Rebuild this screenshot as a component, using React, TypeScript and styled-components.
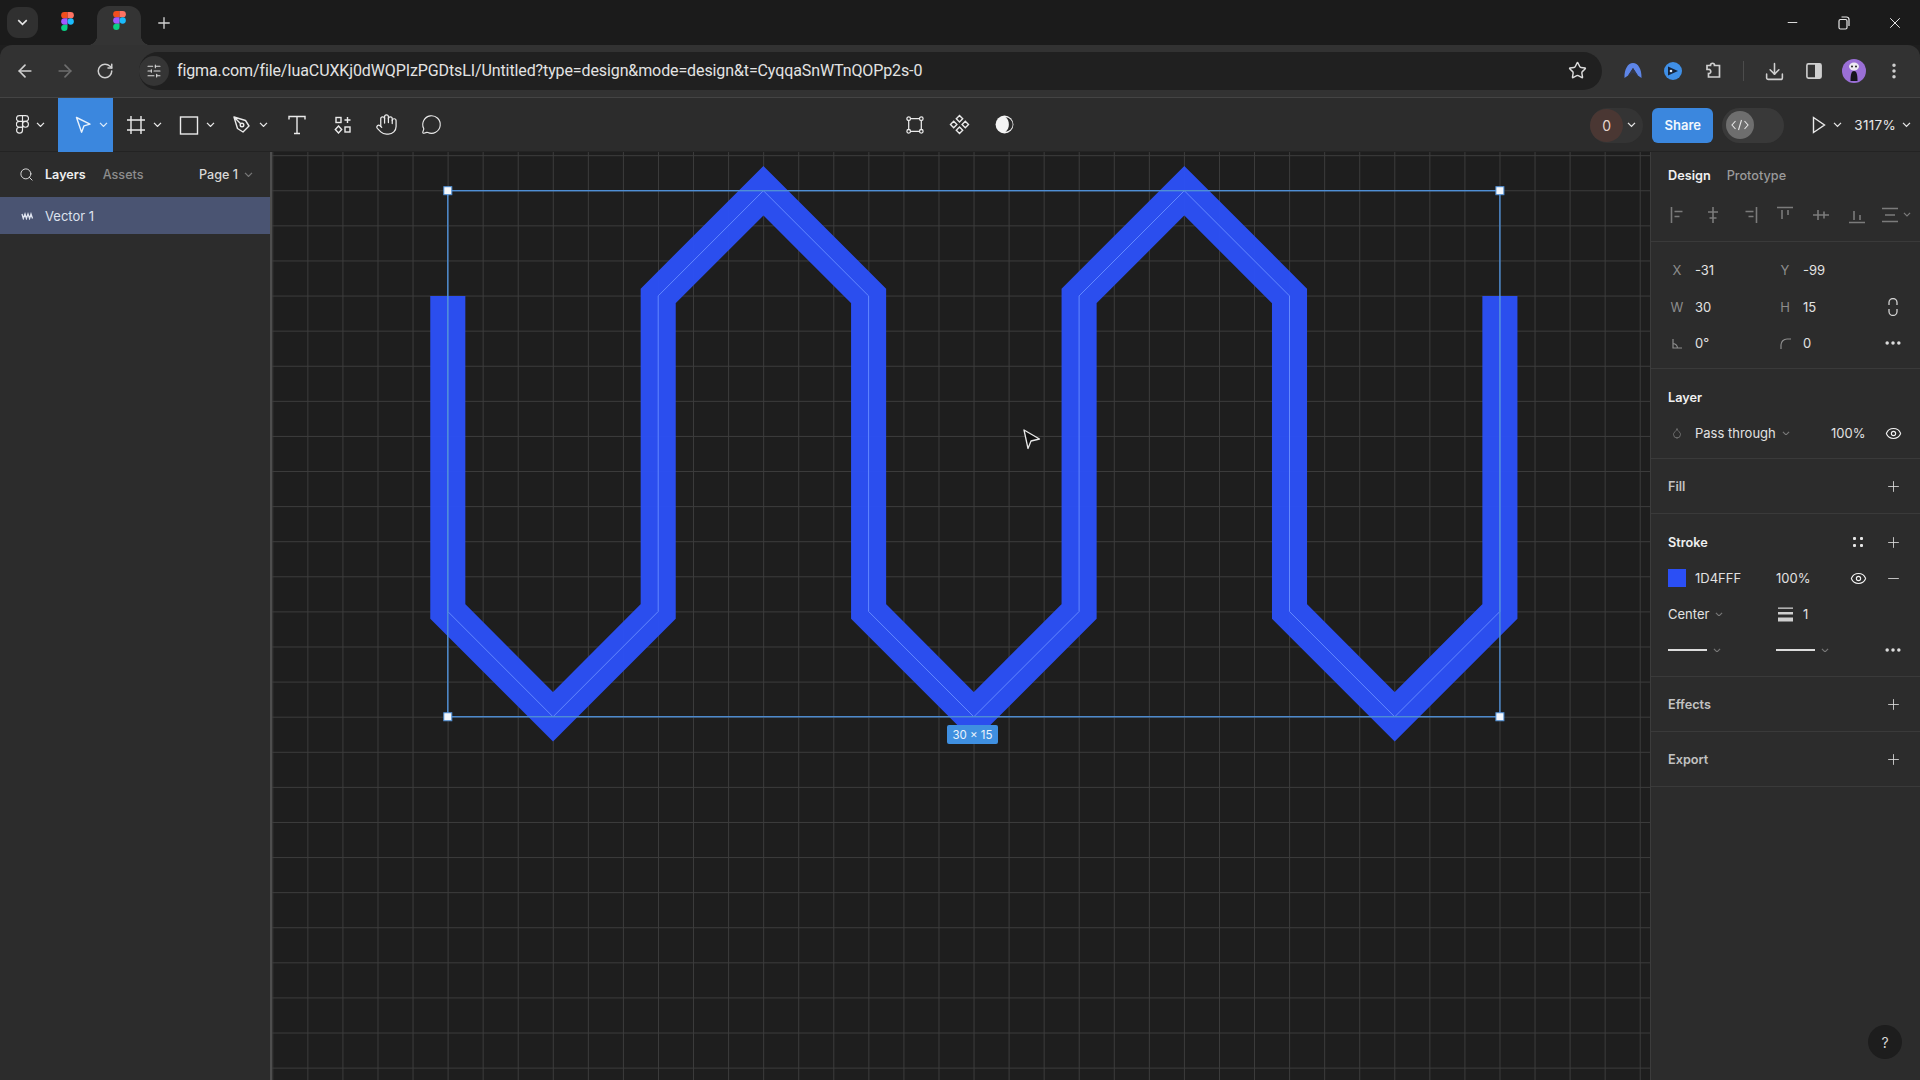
import React from "react";
import styled, { createGlobalStyle } from "styled-components";
import {
  ArrowLeft, ArrowRight, RotateCw, Star, Download, Ellipsis, EllipsisVertical, Plus, Minus, Eye,
  Search, Hand, MessageCircle, SlidersHorizontal, X, Droplet,
} from "lucide-react";

const Global = createGlobalStyle`
  html, body { margin: 0; padding: 0; background: #1e1e1e; }
  body { font-family: Inter, "Liberation Sans", sans-serif; overflow: hidden; }
  * { box-sizing: border-box; }
`;

const Page = styled.div`
  width: 1920px; height: 1080px; display: flex; flex-direction: column; overflow: hidden; background: #1e1e1e;
`;

/* ---------- Browser chrome ---------- */
const TabStrip = styled.div`
  height: 45px; background: #1b1b1b; display: flex; align-items: flex-start; padding: 7px 0 0 7px; flex: none;
`;
const TabListButton = styled.div`
  width: 31px; height: 31px; border-radius: 11px; background: #303030; color: #e6e6e6;
  display: flex; align-items: center; justify-content: center;
`;
const Tab = styled.div<{ $active?: boolean }>`
  position: relative; height: 39px; width: 44px; display: flex; align-items: center; justify-content: center;
  padding-bottom: 11px; margin-top: ${(p) => (p.$active ? "-1px" : "0")};
  margin-left: ${(p) => (p.$active ? "8px" : "7px")};
  background: ${(p) => (p.$active ? "#343434" : "transparent")};
  border-radius: 12px 12px 0 0;
  ${(p) => p.$active && `
    &::before, &::after { content: ""; position: absolute; bottom: 0; width: 10px; height: 10px; }
    &::before { left: -10px; background: radial-gradient(circle at 0 0, transparent 10px, #343434 10.5px); }
    &::after { right: -10px; background: radial-gradient(circle at 100% 0, transparent 10px, #343434 10.5px); }
  `}
`;
const NewTab = styled.div`
  width: 30px; height: 31px; margin-left: 8px; color: #d2d2d2; display: flex; align-items: center; justify-content: center;
`;
const WindowControls = styled.div`
  margin-left: auto; display: flex; align-items: center; height: 31px; color: #e8e8e8;
`;
const WindowButton = styled.div`
  width: 51px; display: flex; align-items: center; justify-content: center;
`;
const BrowserBar = styled.div`
  height: 53px; background: #323232; border-radius: 12px 12px 0 0; flex: none; display: flex; align-items: center;
  padding: 0 6px 0 5px; border-bottom: 1px solid #444;
`;
const NavButton = styled.div<{ $off?: boolean }>`
  width: 40px; height: 40px; display: flex; align-items: center; justify-content: center;
  color: ${(p) => (p.$off ? "#6e6e6e" : "#cfcfcf")};
`;
const AddressBar = styled.div`
  flex: 1; height: 38px; margin: -1px 11px 0 14px; border-radius: 19px; background: #202020; display: flex; align-items: center;
  padding-right: 15px;
`;
const SiteChip = styled.div`
  width: 30px; height: 30px; border-radius: 50%; background: #353535; color: #dcdcdc; flex: none;
  display: flex; align-items: center; justify-content: center;
`;
const Url = styled.div`
  margin-left: 8px; font-family: Roboto, "Liberation Sans", sans-serif; font-size: 16px; color: #e3e3e3; white-space: nowrap;
  letter-spacing: -0.11px;
`;
const UrlStar = styled.div`
  margin-left: auto; color: #dcdcdc; display: flex;
`;
const ChromeButton = styled.div`
  width: 40px; height: 40px; display: flex; align-items: center; justify-content: center; color: #cfcfcf;
`;
const ChromeDivider = styled.div`
  width: 1px; height: 20px; background: #4c4c4c; margin: 0 10px;
`;
const AvatarFace = styled.div`
  width: 24px; height: 24px; border-radius: 50%; background: #9a6fd6; display: flex; align-items: center; justify-content: center;
`;

/* ---------- Figma toolbar ---------- */
const AppToolbar = styled.div`
  height: 54px; flex: none; background: #2c2c2c; display: grid; grid-template-columns: 1fr auto 1fr; align-items: center;
  border-bottom: 1px solid #232323;
`;
const ToolGroup = styled.div`
  display: flex; align-items: center; height: 54px;
`;
const Tool = styled.div<{ $w: number; $pad?: number; $active?: boolean }>`
  width: ${(p) => p.$w}px; height: 54px; flex: none; display: flex; align-items: center; justify-content: center; gap: 7px;
  padding: 0 0 1px ${(p) => p.$pad ?? 0}px; color: #eaeaea; background: ${(p) => (p.$active ? "#3b87de" : "transparent")};
`;
const CenterTools = styled.div`
  display: flex; align-items: center; gap: 25px; color: #eaeaea; padding-bottom: 1px;
`;
const RightTools = styled.div`
  display: flex; align-items: center; justify-content: flex-end; height: 54px; color: #e8e8e8; padding-right: 9px;
`;
const Multiplayer = styled.div`
  width: 53px; height: 35px; border-radius: 18px; background: #343434; display: flex; align-items: center; gap: 4px;
`;
const AvatarZero = styled.div`
  width: 33px; height: 33px; border-radius: 50%; background: #4a3733; color: #e6d4cc; font-size: 14px;
  display: flex; align-items: center; justify-content: center;
`;
const ShareButton = styled.div`
  width: 61px; height: 35px; margin-left: 9px; border-radius: 6px; background: #3b87de; color: #f2f7fd; font-size: 13px; font-weight: 600;
  display: flex; align-items: center; justify-content: center;
`;
const DevToggle = styled.div`
  width: 62px; height: 35px; margin-left: 9px; border-radius: 18px; background: #393939; display: flex; align-items: center; padding-left: 4px;
`;
const DevKnob = styled.div`
  width: 28px; height: 28px; border-radius: 50%; background: #6e6e6e; color: #e6e6e6; display: flex; align-items: center; justify-content: center;
`;
const PlayGroup = styled.div`
  display: flex; align-items: center; gap: 7px; margin-left: 28px;
`;
const Zoom = styled.div`
  display: flex; align-items: center; gap: 6px; margin-left: 12px; font-size: 13.5px; color: #e8e8e8; letter-spacing: 0.3px;
`;

/* ---------- Work area ---------- */
const Work = styled.div`
  flex: 1; display: flex; min-height: 0;
`;
const LeftPanel = styled.div`
  width: 272px; flex: none; background: #2c2c2c; border-right: 2px solid #4e4e4e;
`;
const PanelTabs = styled.div`
  height: 45px; display: flex; align-items: center; padding: 0 17px 0 19px;
`;
const PanelSearch = styled.div`
  width: 26px; color: #d8d8d8; display: flex;
`;
const PanelTab = styled.div<{ $on?: boolean }>`
  font-weight: ${(p) => (p.$on ? 600 : 500)}; color: ${(p) => (p.$on ? "#efefef" : "#8d8d8d")}; margin-right: 17px; font-size: 12.6px;
`;
const PagePicker = styled.div`
  margin-left: auto; display: flex; align-items: center; gap: 6px; color: #d8d8d8; font-size: 12.6px; font-weight: 500;
`;
const LayerRow = styled.div`
  height: 37px; background: #4a5472; display: flex; align-items: center; padding-left: 21px; gap: 11px; color: #dde2ee; font-size: 13px;
`;
const Canvas = styled.div`
  position: relative; flex: 1; overflow: hidden; background-color: #1e1e1e;
  background-image:
    linear-gradient(to right, #3c3c3c 1px, transparent 1px),
    linear-gradient(to bottom, #3c3c3c 1px, transparent 1px);
  background-size: 35.07px 35.1px;
  background-position: 0.3px 3.2px;
`;
const CanvasArt = styled.svg`
  position: absolute; left: 0; top: 0;
`;
const SizeBadge = styled.div`
  position: absolute; left: 675px; top: 573px; width: 51px; height: 19px; border-radius: 2px; background: #3f8fe0; color: #eaf3fc;
  font-size: 11.5px; display: flex; align-items: center; justify-content: center; white-space: nowrap;
`;

/* ---------- Right panel ---------- */
const RightPanel = styled.div`
  position: relative; width: 270px; flex: none; background: #2c2c2c; border-left: 1px solid #3c3c3c; font-size: 13px; color: #e2e2e2;
`;
const DesignTabs = styled.div`
  height: 46px; display: flex; align-items: center; padding-left: 17px; gap: 16px;
`;
const DesignTab = styled.div<{ $on?: boolean }>`
  font-size: 12.7px; font-weight: ${(p) => (p.$on ? 600 : 500)}; color: ${(p) => (p.$on ? "#f0f0f0" : "#9a9a9a")};
`;
const AlignRow = styled.div`
  height: 44px; padding: 0 0 10px 8px; display: grid; grid-template-columns: repeat(6, 36px) auto; align-items: center; justify-items: center;
  color: #7b7b7b; border-bottom: 1px solid #3a3a3a;
`;
const DistField = styled.div`
  display: flex; align-items: center; gap: 3px; margin-left: -4px; color: #7b7b7b;
`;
const Section = styled.div<{ $top?: number }>`
  padding: ${(p) => p.$top ?? 10}px 0 0; border-bottom: 1px solid #3a3a3a;
`;
const FieldGrid = styled.div<{ $h?: number }>`
  display: grid; grid-template-columns: 27px 81px 27px 42px 26px 35px; align-items: center; padding-left: 17px;
  height: ${(p) => p.$h ?? 36}px;
`;
const FieldLabel = styled.div`
  width: 18px; display: flex; justify-content: center; color: #8d8d8d; font-size: 13px;
`;
const FieldValue = styled.div`
  color: #e2e2e2; font-size: 13px; white-space: nowrap;
`;
const SectionHead = styled.div<{ $on?: boolean }>`
  grid-column: 1 / span 4; font-weight: 600; font-size: 12.7px; color: ${(p) => (p.$on ? "#f0f0f0" : "#c2c2c2")};
`;
const Slot = styled.div<{ $c: number }>`
  grid-column: ${(p) => p.$c}; justify-self: ${(p) => (p.$c === 6 ? "end" : "start")};
  display: flex; align-items: center; justify-content: center; width: 26px; color: #dcdcdc;
`;
const EyeSlot = styled(Slot)`
  color: #f2f2f2;
`;
const InlineField = styled.div<{ $c?: string }>`
  grid-column: ${(p) => p.$c ?? "auto"}; display: flex; align-items: center; gap: 6px; color: #e2e2e2; font-size: 13px; white-space: nowrap;
`;
const OpacityValue = styled.div`
  grid-column: 4; font-size: 13px; padding-left: 28px; color: #e2e2e2; white-space: nowrap;
`;
const Swatch = styled.div`
  width: 18px; height: 18px; background: #2b4ff5;
`;
const StrokeLine = styled.div`
  width: 39px; height: 2px; background: #dcdcdc;
`;
const FillerRow = styled.div<{ $h: number }>`
  height: ${(p) => p.$h}px;
`;
const HelpButton = styled.div`
  position: absolute; right: 18px; bottom: 21px; width: 34px; height: 34px; border-radius: 50%; background: #1d1d1d; color: #d6d6d6;
  font-size: 14px; display: flex; align-items: center; justify-content: center;
`;

/* ---------- Small drawings ---------- */
const Chev = ({ c = "currentColor", w = 9 }: { c?: string; w?: number }) => (
  <svg width={w} height={w * 0.62} viewBox="0 0 9 5.6" fill="none" stroke={c} strokeWidth="1.3"><path d="M1 .9l3.500 3.500L8 .9" /></svg>
);
const FigmaColor = () => (
  <svg width="13" height="19" viewBox="0 0 12 18">
    <path d="M3 0h3v6H3a3 3 0 0 1 0-6z" fill="#f24e1e" />
    <path d="M6 0h3a3 3 0 0 1 0 6H6z" fill="#ff7262" />
    <path d="M3 6h3v6H3a3 3 0 0 1 0-6z" fill="#a259ff" />
    <circle cx="9" cy="9" r="3" fill="#1abcfe" />
    <path d="M3 12h3v3a3 3 0 1 1-3-3z" fill="#0acf83" />
  </svg>
);
const line = { fill: "none", stroke: "currentColor", strokeWidth: 1.4 } as const;
const FigmaMono = () => (
  <svg width="13" height="19" viewBox="0 0 12 18" {...line} strokeWidth={1.1}>
    <path d="M3 .6h3v5.400H3a2.700 2.700 0 0 1 0-5.400zM6 .6h3a2.700 2.700 0 0 1 0 5.400H6zM3 6h3v5.600H3A2.800 2.800 0 0 1 3 6z" />
    <circle cx="8.800" cy="8.800" r="2.800" />
    <path d="M3 11.600h3v3a2.800 2.800 0 1 1-3-3z" />
  </svg>
);
const MoveArrow = () => (
  <svg width="18" height="18" viewBox="0 0 18 18" fill="none" stroke="#e9f2fc" strokeWidth="1.4" strokeLinejoin="round"><path d="M2.500 1.500l13.500 6.600-6 1.700-2.400 6.400z" /></svg>
);
const FrameGlyph = () => (
  <svg width="20" height="20" viewBox="0 0 20 20" {...line}><path d="M5 1v18M15 1v18M1 5h18M1 15h18" /></svg>
);
const RectGlyph = () => (
  <svg width="20" height="20" viewBox="0 0 20 20" {...line}><rect x="1.500" y="2" width="17" height="17" /></svg>
);
const PenGlyph = () => (
  <svg width="20" height="20" viewBox="0 0 20 20" {...line} strokeLinejoin="round">
    <path d="M2 2l11.500 3.500L17 11l-6 6-5.500-3.500zM2 2l6.700 6.700" />
    <circle cx="10" cy="10" r="1.800" />
  </svg>
);
const TextGlyph = () => (
  <svg width="20" height="20" viewBox="0 0 20 20" {...line}><path d="M2 4.500V1.500h16v3M10 1.500v17M7 18.500h6" /></svg>
);
const ActionsGlyph = () => (
  <svg width="18" height="18" viewBox="0 0 18 18" {...line}>
    <rect x="2" y="1.500" width="5" height="5" />
    <path d="M13.500 1v6M10.500 4h6" />
    <path d="M4.500 10l3.200 3.500-3.200 3.500-3.200-3.500z" />
    <rect x="11" y="11" width="5" height="5" />
  </svg>
);
const EditObject = () => (
  <svg width="18" height="18" viewBox="0 0 20 20" {...line}>
    <path d="M5 3h10M5 17h10M3 5v10M17 5v10" />
    <circle cx="3" cy="3" r="2" /><circle cx="17" cy="3" r="2" /><circle cx="3" cy="17" r="2" /><circle cx="17" cy="17" r="2" />
  </svg>
);
const Diamonds = () => (
  <svg width="21" height="21" viewBox="0 0 21 21" {...line}>
    <path d="M10.500 1.500l3.200 3.200-3.200 3.200-3.200-3.200zM10.500 13.100l3.200 3.200-3.200 3.200-3.200-3.200zM4.700 7.300l3.200 3.200-3.200 3.200-3.200-3.200zM16.300 7.300l3.200 3.200-3.200 3.200-3.200-3.200z" />
  </svg>
);
const Contrast = () => (
  <svg width="19" height="19" viewBox="0 0 20 20">
    <circle cx="10" cy="10" r="9.400" fill="#f4f4f4" />
    <path d="M11 2.400a7.600 7.600 0 0 1 0 15.200c2.600-1.600 3.600-4.600 3.600-7.600s-1-6-3.600-7.600z" fill="#2c2c2c" />
  </svg>
);
const CodeGlyph = () => (
  <svg width="18" height="12" viewBox="0 0 18 12" fill="none" stroke="currentColor" strokeWidth="1.1"><path d="M4.500 2L1 6l3.500 4M13.500 2L17 6l-3.500 4M10.500 1L7.500 11" /></svg>
);
const PlayGlyph = () => (
  <svg width="14" height="18" viewBox="0 0 14 18" {...line}><path d="M1.500 1.500l11 7.500-11 7.500z" /></svg>
);
const RestoreGlyph = () => (
  <svg width="12" height="14" viewBox="0 0 12 14" {...line} strokeWidth={1.2}><rect x="1" y="3.500" width="8" height="9.500" rx="1.500" /><path d="M3.500 1h5A2.500 2.500 0 0 1 11 3.500V10" /></svg>
);
const NordGlyph = () => (
  <svg width="22" height="20" viewBox="0 0 22 20">
    <path d="M2.500 17C2.200 8 6 2 11 2s8.800 6 8.500 15l-3.600-2.500L11 7l-4.900 7.500z" fill="#5e86e8" />
    <path d="M6.100 14.500L11 7l4.900 7.500-3.900-2.200h-2z" fill="#33374a" />
  </svg>
);
const PlayExt = () => (
  <svg width="18" height="18" viewBox="0 0 18 18">
    <circle cx="9" cy="9" r="9" fill="#3f8fe6" />
    <path d="M4 4.500l10 4.500-10 4.500z" fill="#15233a" />
    <circle cx="7" cy="9" r="1.300" fill="#dfeaf8" />
  </svg>
);
const PuzzleGlyph = () => (
  <svg width="20" height="20" viewBox="0 0 20 20" {...line} strokeWidth={1.7}>
    <path d="M4 4.500h3.500c-.4-3 4.500-3 4 0H16.500V16H5.500v-3.500c3 .5 3-4.500 0-4H4z" />
  </svg>
);
const SidebarGlyph = () => (
  <svg width="16" height="16" viewBox="0 0 16 16"><rect x=".9" y=".9" width="14.200" height="14.200" rx="1.500" fill="none" stroke="#cfcfcf" strokeWidth="1.600" /><rect x="9" y="1" width="6" height="14" fill="#cfcfcf" /></svg>
);
const FaceGlyph = () => (
  <svg width="16" height="20" viewBox="0 0 16 20">
    <ellipse cx="8" cy="5.500" rx="5" ry="4" fill="#ece8f2" />
    <circle cx="6" cy="5.500" r="1" fill="#222" /><circle cx="10" cy="5.500" r="1" fill="#222" />
    <path d="M4.500 20c0-7 1-10 3.500-10s3.500 3 3.500 10z" fill="#14141a" />
  </svg>
);
const VectorMini = () => (
  <svg width="13" height="8" viewBox="0 0 13 8" fill="none" stroke="#dfe4f0" strokeWidth="1.300"><path d="M1 2l1.300 4.500L4 2l1.400 4.500L7 2l1.600 4.500L10 2l1.500 4.500" /></svg>
);
const alignIcons: Record<string, React.ReactNode> = {
  left: <path d="M4.500 2v16M7.500 6.500h8M7.500 11.500h5" />,
  centerH: <path d="M10 2v16M5 7h10M6.500 13h7" />,
  right: <path d="M17.500 2v16M6.500 6.500h8M9.500 11.500h5" />,
  top: <path d="M2 2.500h16M7 5v9M13 5v5" />,
  centerV: <path d="M2 10h16M7 5v10M13 6.500v7" />,
  bottom: <path d="M2 17.500h16M7 6v9M13 10v5" />,
};
const AlignGlyph = ({ kind }: { kind: string }) => (
  <svg width="20" height="20" viewBox="0 0 20 20" fill="none" stroke="currentColor" strokeWidth="1.600">{alignIcons[kind]}</svg>
);
const DistGlyph = () => (
  <svg width="19" height="16" viewBox="0 0 19 16" fill="none" stroke="currentColor" strokeWidth="1.500"><path d="M1 1.500h16M4 8h10M1 14.500h16" /></svg>
);
const LinkGlyph = () => (
  <svg width="12" height="18" viewBox="0 0 12 18" fill="none" stroke="#d2d2d2" strokeWidth="1.300"><path d="M2 7V4.500a4 4 0 0 1 8 0V7M2 11v2.500a4 4 0 0 0 8 0V11" /></svg>
);
const AngleGlyph = () => (
  <svg width="11" height="11" viewBox="0 0 11 11" fill="none" stroke="#8d8d8d" strokeWidth="1.200"><path d="M1 1v9h9M1 5.500a5 5 0 0 1 4.500 4.500" /></svg>
);
const RadiusGlyph = () => (
  <svg width="11" height="11" viewBox="0 0 11 11" fill="none" stroke="#8d8d8d" strokeWidth="1.200"><path d="M1 11V7a6 6 0 0 1 6-6h4" /></svg>
);
const StylesGlyph = () => (
  <svg width="14" height="14" viewBox="0 0 14 14" fill="#e6e6e6"><rect x="2" y="2" width="3" height="3" rx="1" /><rect x="9" y="2" width="3" height="3" rx="1" /><rect x="2" y="9" width="3" height="3" rx="1" /><rect x="9" y="9" width="3" height="3" rx="1" /></svg>
);
const WeightGlyph = () => (
  <svg width="15" height="15" viewBox="0 0 15 15" fill="#cfcfcf"><rect width="15" height="1.300" y="0.500" /><rect width="15" height="2.500" y="5" /><rect width="15" height="4" y="10.500" /></svg>
);

const U = 35.07;
const OX = 447.8;
const OY = 190.7;
const pts = [[0,3],[0,12],[3,15],[6,12],[6,3],[9,0],[12,3],[12,12],[15,15],[18,12],[18,3],[21,0],[24,3],[24,12],[27,15],[30,12],[30,3]]
  .map(([x, y]) => `${(OX + x * U).toFixed(1)},${(OY + y * U).toFixed(1)}`).join(" ");
const BW = 30 * U;
const BH = 15 * U;
const corners = [[OX, OY],[OX + BW, OY],[OX, OY + BH],[OX + BW, OY + BH]];

const Plain = ({ label }: { label: string }) => (
  <FieldGrid $h={54}>
    <SectionHead>{label}</SectionHead>
    <Slot $c={6}><Plus size={17} strokeWidth={1.2} /></Slot>
  </FieldGrid>
);

export default function App() {
  return (
    <Page>
      <Global />
      <TabStrip>
        <TabListButton><Chev w={11} /></TabListButton>
        <Tab><FigmaColor /></Tab>
        <Tab $active><FigmaColor /></Tab>
        <NewTab><Plus size={18} strokeWidth={1.8} /></NewTab>
        <WindowControls>
          <WindowButton><Minus size={15} strokeWidth={1.5} /></WindowButton>
          <WindowButton><RestoreGlyph /></WindowButton>
          <WindowButton><X size={18} strokeWidth={1.3} /></WindowButton>
        </WindowControls>
      </TabStrip>
      <BrowserBar>
        <NavButton><ArrowLeft size={20} strokeWidth={2} /></NavButton>
        <NavButton $off><ArrowRight size={20} strokeWidth={2} /></NavButton>
        <NavButton><RotateCw size={18} strokeWidth={2} /></NavButton>
        <AddressBar>
          <SiteChip><SlidersHorizontal size={16} strokeWidth={1.6} /></SiteChip>
          <Url>figma.com/file/IuaCUXKj0dWQPIzPGDtsLI/Untitled?type=design&amp;mode=design&amp;t=CyqqaSnWTnQOPp2s-0</Url>
          <UrlStar><Star size={19} strokeWidth={1.8} /></UrlStar>
        </AddressBar>
        <ChromeButton><NordGlyph /></ChromeButton>
        <ChromeButton><PlayExt /></ChromeButton>
        <ChromeButton><PuzzleGlyph /></ChromeButton>
        <ChromeDivider />
        <ChromeButton><Download size={21} strokeWidth={1.8} /></ChromeButton>
        <ChromeButton><SidebarGlyph /></ChromeButton>
        <ChromeButton><AvatarFace><FaceGlyph /></AvatarFace></ChromeButton>
        <ChromeButton><EllipsisVertical size={20} strokeWidth={2.2} /></ChromeButton>
      </BrowserBar>
      <AppToolbar>
        <ToolGroup>
          <Tool $w={58} $pad={3}><FigmaMono /><Chev /></Tool>
          <Tool $w={55} $pad={10} $active><MoveArrow /><Chev c="#dcebfa" /></Tool>
          <Tool $w={52} $pad={10}><FrameGlyph /><Chev /></Tool>
          <Tool $w={53} $pad={10}><RectGlyph /><Chev /></Tool>
          <Tool $w={53} $pad={10}><PenGlyph /><Chev /></Tool>
          <Tool $w={52}><TextGlyph /></Tool>
          <Tool $w={40}><ActionsGlyph /></Tool>
          <Tool $w={47}><Hand size={23} strokeWidth={1.3} /></Tool>
          <Tool $w={42}><MessageCircle size={21} strokeWidth={1.3} /></Tool>
        </ToolGroup>
        <CenterTools>
          <EditObject />
          <Diamonds />
          <Contrast />
        </CenterTools>
        <RightTools>
          <Multiplayer><AvatarZero>0</AvatarZero><Chev /></Multiplayer>
          <ShareButton>Share</ShareButton>
          <DevToggle><DevKnob><CodeGlyph /></DevKnob></DevToggle>
          <PlayGroup><PlayGlyph /><Chev /></PlayGroup>
          <Zoom>3117%<Chev /></Zoom>
        </RightTools>
      </AppToolbar>
      <Work>
        <LeftPanel>
          <PanelTabs>
            <PanelSearch><Search size={15} strokeWidth={1.6} /></PanelSearch>
            <PanelTab $on>Layers</PanelTab>
            <PanelTab>Assets</PanelTab>
            <PagePicker>Page 1<Chev c="#777" /></PagePicker>
          </PanelTabs>
          <LayerRow><VectorMini />Vector 1</LayerRow>
        </LeftPanel>
        <Canvas>
          <CanvasArt width="1377" height="928" viewBox="272 152 1377 928">
            <polyline points={pts} fill="none" stroke="#2b4ff5" strokeOpacity="0.97" strokeWidth={U} strokeLinejoin="miter" strokeMiterlimit="10" />
            <polyline points={pts} fill="none" stroke="#6388ff" strokeWidth="1" />
            <rect x={OX} y={OY} width={BW} height={BH} fill="none" stroke="#4f8fd6" strokeWidth="1.400" />
            {corners.map(([x, y]) => (
              <rect key={`${x}-${y}`} x={x - 4} y={y - 4} width="8" height="8" fill="#f4f7fb" stroke="#4f8fd6" strokeWidth="1" />
            ))}
            <path d="M1024 430l15.500 9-8.500 2-3 7.500z" fill="#111" stroke="#e8e8e8" strokeWidth="1.300" strokeLinejoin="round" />
          </CanvasArt>
          <SizeBadge>30 × 15</SizeBadge>
        </Canvas>
        <RightPanel>
          <DesignTabs>
            <DesignTab $on>Design</DesignTab>
            <DesignTab>Prototype</DesignTab>
          </DesignTabs>
          <AlignRow>
            <AlignGlyph kind="left" />
            <AlignGlyph kind="centerH" />
            <AlignGlyph kind="right" />
            <AlignGlyph kind="top" />
            <AlignGlyph kind="centerV" />
            <AlignGlyph kind="bottom" />
            <DistField><DistGlyph /><Chev c="#7b7b7b" w={8} /></DistField>
          </AlignRow>
          <Section $top={10}>
            <FieldGrid $h={36.5}>
              <FieldLabel>X</FieldLabel><FieldValue>-31</FieldValue>
              <FieldLabel>Y</FieldLabel><FieldValue>-99</FieldValue>
            </FieldGrid>
            <FieldGrid $h={36.5}>
              <FieldLabel>W</FieldLabel><FieldValue>30</FieldValue>
              <FieldLabel>H</FieldLabel><FieldValue>15</FieldValue>
              <Slot $c={6}><LinkGlyph /></Slot>
            </FieldGrid>
            <FieldGrid $h={36.5}>
              <FieldLabel><AngleGlyph /></FieldLabel><FieldValue>0°</FieldValue>
              <FieldLabel><RadiusGlyph /></FieldLabel><FieldValue>0</FieldValue>
              <Slot $c={6}><Ellipsis size={20} strokeWidth={2.2} /></Slot>
            </FieldGrid>
            <FillerRow $h={6.5} />
          </Section>
          <Section>
            <FieldGrid><SectionHead $on>Layer</SectionHead></FieldGrid>
            <FieldGrid>
              <FieldLabel><Droplet size={12} strokeWidth={1.3} /></FieldLabel>
              <InlineField $c="2 / span 2">Pass through<Chev c="#777" w={8} /></InlineField>
              <OpacityValue>100%</OpacityValue>
              <EyeSlot $c={6}><Eye size={17} strokeWidth={1.6} /></EyeSlot>
            </FieldGrid>
            <FillerRow $h={7} />
          </Section>
          <Section $top={0}><Plain label="Fill" /></Section>
          <Section>
            <FieldGrid>
              <SectionHead $on>Stroke</SectionHead>
              <Slot $c={5}><StylesGlyph /></Slot>
              <Slot $c={6}><Plus size={17} strokeWidth={1.2} /></Slot>
            </FieldGrid>
            <FieldGrid>
              <Swatch />
              <FieldValue>1D4FFF</FieldValue>
              <InlineField $c="3 / span 2">100%</InlineField>
              <EyeSlot $c={5}><Eye size={17} strokeWidth={1.6} /></EyeSlot>
              <Slot $c={6}><Minus size={17} strokeWidth={1.2} /></Slot>
            </FieldGrid>
            <FieldGrid>
              <InlineField $c="1 / span 2">Center<Chev c="#777" w={8} /></InlineField>
              <FieldLabel><WeightGlyph /></FieldLabel>
              <FieldValue>1</FieldValue>
            </FieldGrid>
            <FieldGrid>
              <InlineField $c="1 / span 2"><StrokeLine /><Chev c="#777" w={8} /></InlineField>
              <InlineField $c="3 / span 2"><StrokeLine /><Chev c="#777" w={8} /></InlineField>
              <Slot $c={6}><Ellipsis size={20} strokeWidth={2.2} /></Slot>
            </FieldGrid>
            <FillerRow $h={8} />
          </Section>
          <Section $top={0}><Plain label="Effects" /></Section>
          <Section $top={0}><Plain label="Export" /></Section>
          <HelpButton>?</HelpButton>
        </RightPanel>
      </Work>
    </Page>
  );
}
